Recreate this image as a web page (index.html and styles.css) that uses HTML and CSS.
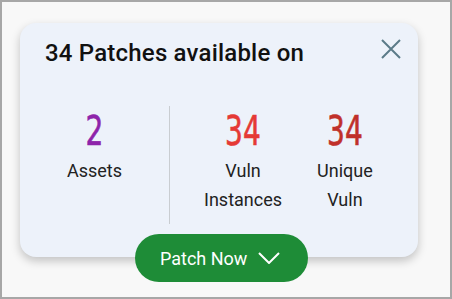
FILE: index.html
```html
<!DOCTYPE html>
<html lang="en">
<head>
    <meta charset="UTF-8">
    <meta name="viewport" content="width=device-width, initial-scale=1.0">
    <title>Patches</title>
    <link rel="stylesheet" href="styles.css">
</head>
<body>

    <div class="frame">
        <div class="card">
            <div class="card-header">
                <h2>34 Patches available on</h2>
                <button class="close" aria-label="Close">
                    <svg width="20" height="20" viewBox="0 0 20 20">
                        <path d="M1 1 L19 19 M19 1 L1 19" stroke="#5b7b88" stroke-width="2" fill="none"/>
                    </svg>
                </button>
            </div>

            <div class="stats">
                <div class="stat stat-assets">
                    <span class="num purple">2</span>
                    <span class="label">Assets</span>
                </div>
                <div class="stats-right">
                    <div class="stat">
                        <span class="num red">34</span>
                        <span class="label">Vuln<br>Instances</span>
                    </div>
                    <div class="stat">
                        <span class="num dark-red">34</span>
                        <span class="label">Unique<br>Vuln</span>
                    </div>
                </div>
            </div>
        </div>

        <button class="patch-btn">
            Patch Now
            <svg width="22" height="12" viewBox="0 0 22 12">
                <path d="M1 1 L11 11 L21 1" stroke="#fff" stroke-width="2" fill="none"/>
            </svg>
        </button>
    </div>

</body>
</html>
```

FILE: styles.css
```css
/* Base */
body {
    margin: 0;
    font-family: 'Roboto', 'Liberation Sans', sans-serif;
    background-color: #f8f8f8;
}

/* Window frame */
.frame {
    height: 299px;
    box-sizing: border-box;
    border: 2px solid #a7a7a7;
    background-color: #f8f8f8;
    overflow: hidden;
}

/* Card */
.card {
    width: 398px;
    height: 234px;
    margin: 21px 0 0 18px;
    box-sizing: border-box;
    background-color: #edf2fa;
    border-radius: 16px;
    box-shadow: 0 4px 10px rgba(0, 0, 0, 0.22);
    padding: 16px 17px 0 25px;
}

.card-header {
    display: flex;
    justify-content: space-between;
    align-items: flex-start;
}

.card-header h2 {
    margin: 0;
    font-size: 24px;
    font-weight: 500;
    line-height: 28px;
    letter-spacing: 0.2px;
    color: #111;
}

.close {
    background: none;
    border: none;
    padding: 0;
    cursor: pointer;
}

/* Numbers */
.stats {
    display: flex;
    height: 118px;
    margin: 39px 0 0 -25px;
}

.stat {
    display: flex;
    flex-direction: column;
    align-items: center;
    padding-top: 3px;
}

.stat-assets {
    width: 149px;
}

.stats-right {
    display: flex;
    gap: 35px;
    padding-left: 34px;
    border-left: 1px solid #c9cdd1;
}

.num {
    display: inline-block;
    font-family: 'DejaVu Sans Condensed', 'DejaVu Sans', sans-serif;
    font-size: 40px;
    line-height: 44px;
    transform: scaleX(0.78);
    -webkit-text-stroke: 0.6px currentColor;
}

.purple { color: #8e24aa; }
.red { color: #e53935; }
.dark-red { color: #c0302a; }

.label {
    margin-top: 3px;
    font-size: 18px;
    line-height: 29px;
    color: #222;
    text-align: center;
}

/* Button */
.patch-btn {
    display: flex;
    align-items: center;
    gap: 11px;
    width: 173px;
    height: 48px;
    margin: -23px 0 0 133px;
    padding: 0 0 0 25px;
    border: none;
    border-radius: 24px;
    background-color: #1e8c37;
    color: #fff;
    font-family: 'Roboto', sans-serif;
    font-size: 18px;
    cursor: pointer;
    position: relative;
}
```
